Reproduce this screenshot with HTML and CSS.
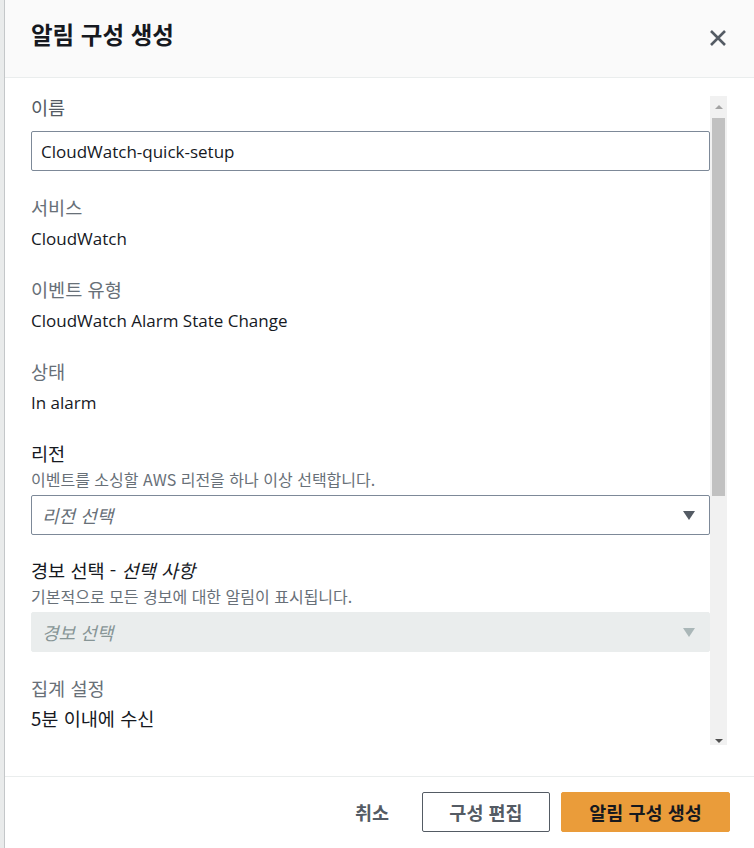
FILE: index.html
```html
<!DOCTYPE html>
<html lang="ko">
<head>
<meta charset="utf-8">
<title>알림 구성 생성</title>
<link rel="stylesheet" href="styles.css">
</head>
<body>
<div class="page">
  <div class="backdrop"></div>
  <div class="modal">
    <header class="modal-header">
      <h1 class="title">알림 구성 생성</h1>
      <button class="close" aria-label="닫기">
        <svg width="18" height="18" viewBox="0 0 18 18"><path d="M2 2 L16 16 M16 2 L2 16" stroke="#545b64" stroke-width="2.6" fill="none"/></svg>
      </button>
    </header>
    <div class="modal-body">
      <div class="scroll-content">
        <div class="field first">
          <div class="label label-mid">이름</div>
          <div class="input">CloudWatch-quick-setup</div>
        </div>
        <div class="field after-input">
          <div class="label">서비스</div>
          <div class="value">CloudWatch</div>
        </div>
        <div class="field">
          <div class="label">이벤트 유형</div>
          <div class="value">CloudWatch Alarm State Change</div>
        </div>
        <div class="field">
          <div class="label">상태</div>
          <div class="value">In alarm</div>
        </div>
        <div class="field">
          <div class="label label-dark">리전</div>
          <div class="desc">이벤트를 소싱할 AWS 리전을 하나 이상 선택합니다.</div>
          <div class="select">
            <span class="placeholder">리전 선택</span>
            <span class="caret"></span>
          </div>
        </div>
        <div class="field after-input-small">
          <div class="label label-dark">경보 선택 - <i>선택 사항</i></div>
          <div class="desc">기본적으로 모든 경보에 대한 알림이 표시됩니다.</div>
          <div class="select disabled">
            <span class="placeholder">경보 선택</span>
            <span class="caret"></span>
          </div>
        </div>
        <div class="field after-input">
          <div class="label">집계 설정</div>
          <div class="value value-ko">5분 이내에 수신</div>
        </div>
      </div>
      <div class="scrollbar">
        <div class="sb-btn"><span class="sb-up"></span></div>
        <div class="sb-track"><div class="sb-thumb"></div></div>
        <div class="sb-btn"><span class="sb-down"></span></div>
      </div>
    </div>
    <footer class="modal-footer">
      <button class="btn btn-link">취소</button>
      <button class="btn btn-normal">구성 편집</button>
      <button class="btn btn-primary">알림 구성 생성</button>
    </footer>
  </div>
</div>
</body>
</html>
```

FILE: styles.css
```css
* { box-sizing: border-box; }
html, body {
  margin: 0;
  padding: 0;
  width: 754px;
  height: 848px;
  overflow: hidden;
  background: #ffffff;
  font-family: "Open Sans", "Noto Sans CJK KR", sans-serif;
  color: #16191f;
}
.page {
  display: flex;
  width: 754px;
  height: 848px;
}
.backdrop {
  width: 4px;
  background: #e9ebeb;
  flex: none;
}
.modal {
  flex: 1;
  display: flex;
  flex-direction: column;
  border-left: 1px solid #c4c7c9;
  background: #ffffff;
}
.modal-header {
  height: 78px;
  flex: none;
  background: #fafafa;
  border-bottom: 1px solid #eaeded;
  display: flex;
  align-items: center;
  justify-content: space-between;
  padding: 0 26px 0 26px;
}
.title {
  margin: 0;
  font-size: 23.5px;
  font-weight: 700;
  line-height: 30px;
  margin-top: -10px;
  color: #16191f;
  font-family: "Noto Sans CJK KR", sans-serif;
}
.close {
  border: 0;
  background: transparent;
  padding: 0;
  width: 18px;
  height: 18px;
  margin-top: -2px;
  margin-right: 1px;
  display: flex;
}
.modal-body {
  flex: none;
  height: 699px;
  display: flex;
  padding: 18px 27px 31px 26px;
  border-bottom: 1px solid #eaeded;
}
.scroll-content {
  flex: 1;
  overflow: hidden;
  font-size: 17px;
  margin-top: -6px;
  padding-top: 6px;
}
.field { margin-top: 28px; }
.field.first { margin-top: 0; }
.field.after-input { margin-top: 25px; }
.field.after-input-small { margin-top: 24px; }
.label {
  line-height: 22px;
  color: #687078;
  font-size: 18.6px;
  font-family: "Noto Sans CJK KR", sans-serif;
}
.label-mid { color: #545b64; }
.label-dark { color: #16191f; }
.label i { font-style: italic; }
.value {
  margin-top: 10px;
  line-height: 22px;
  color: #16191f;
}
.value-ko {
  margin-top: 8px;
  font-size: 18.6px;
  font-family: "Noto Sans CJK KR", sans-serif;
}
.desc {
  margin-top: 6px;
  font-size: 16px;
  line-height: 18px;
  color: #687078;
  font-family: "Noto Sans CJK KR", sans-serif;
}
.input {
  margin-top: 13px;
  height: 40px;
  border: 1px solid #7d8998;
  border-radius: 2px;
  padding: 0 9px;
  display: flex;
  align-items: center;
  color: #16191f;
}
.select {
  margin-top: 7px;
  height: 40px;
  border: 1px solid #7d8998;
  border-radius: 2px;
  padding: 0 14px 0 10px;
  display: flex;
  align-items: center;
  justify-content: space-between;
}
.placeholder {
  font-style: italic;
  color: #687078;
  font-size: 18px;
  font-family: "Noto Sans CJK KR", sans-serif;
}
.caret {
  width: 0;
  height: 0;
  border-left: 6px solid transparent;
  border-right: 6px solid transparent;
  border-top: 9px solid #545b64;
}
.select.disabled {
  background: #eaeded;
  border-color: #eaeded;
}
.select.disabled .placeholder { color: #879596; }
.select.disabled .caret { border-top-color: #aab7b8; }
.scrollbar {
  width: 17px;
  flex: none;
  background: #f1f1f1;
  display: flex;
  flex-direction: column;
}
.sb-btn {
  height: 22px;
  flex: none;
  display: flex;
  align-items: center;
  justify-content: center;
}
.sb-up {
  width: 0; height: 0;
  border-left: 4px solid transparent;
  border-right: 4px solid transparent;
  border-bottom: 4px solid #a3a3a3;
}
.sb-down {
  width: 0; height: 0;
  border-left: 4px solid transparent;
  border-right: 4px solid transparent;
  border-top: 4px solid #505050;
  margin-top: 14px;
}
.sb-track {
  flex: 1;
  padding: 0 2px;
}
.sb-thumb {
  height: 378px;
  background: #c1c1c1;
}
.modal-footer {
  flex: 1;
  display: flex;
  justify-content: flex-end;
  align-items: flex-start;
  padding: 15px 24px 0 0;
  gap: 11px;
}
.btn {
  height: 40px;
  border-radius: 2px;
  font-family: "Noto Sans CJK KR", sans-serif;
  font-size: 18.5px;
  font-weight: 700;
  padding: 0 16px;
  cursor: pointer;
}
.btn-link {
  border: 1px solid transparent;
  background: transparent;
  color: #545b64;
  margin-right: 5px;
}
.btn-normal {
  border: 1px solid #545b64;
  background: #ffffff;
  color: #545b64;
  width: 128px;
}
.btn-primary {
  border: 1px solid #ea9c3a;
  background: #ea9c3a;
  color: #16191f;
  width: 169px;
}
```
